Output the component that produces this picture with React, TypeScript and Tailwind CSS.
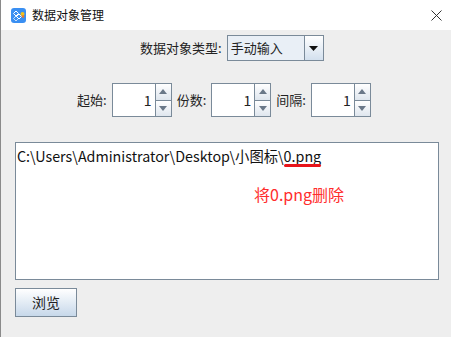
import React from 'react';

const font = { fontFamily: '"Noto Sans CJK SC", "Noto Sans", sans-serif' };

const Spinner = () => (
  <div className="flex h-[34px] w-[60px]">
    <div className="flex flex-1 items-center justify-end border border-[#7a8a99] bg-white pr-[3px] text-[14px] text-[#222]">
      1
    </div>
    <div className="flex w-[16px] flex-col border-y border-r border-[#7a8a99]">
      <div className="flex flex-1 items-center justify-center border-b border-[#7a8a99] bg-gradient-to-b from-white to-[#dfe6ee]">
        <svg width="8" height="5" viewBox="0 0 8 5">
          <path d="M0 5 L4 0 L8 5 Z" fill="#6a7888" />
        </svg>
      </div>
      <div className="flex flex-1 items-center justify-center bg-gradient-to-b from-white to-[#dfe6ee]">
        <svg width="8" height="5" viewBox="0 0 8 5">
          <path d="M0 0 L8 0 L4 5 Z" fill="#6a7888" />
        </svg>
      </div>
    </div>
  </div>
);

const AppIcon = () => (
  <svg width="15" height="15" viewBox="0 0 15 15">
    <rect x="0" y="0" width="15" height="15" rx="3" fill="#3a8ff2" />
    <g fill="none" stroke="#ffffff" strokeWidth="1">
      <path d="M5 3 L7.5 5.5 L5 8 L2.5 5.5 Z" />
      <path d="M8 6 L10.5 8.5 L8 11 L5.5 8.5 Z" />
      <path d="M5 8 L7.5 10.5 L5 13 L2.5 10.5 Z" opacity="0.7" />
    </g>
    <circle cx="11.5" cy="6" r="2" fill="#f5c21a" />
    <circle cx="12" cy="8.5" r="1.3" fill="#f07a22" />
  </svg>
);

export default function App() {
  return (
    <div className="flex h-[337px] w-[451px] flex-col border-l border-[#8a8a8a] bg-[#eeeeee]" style={font}>
      <div className="flex h-[30px] items-center bg-white pl-[10px] pr-[9px]">
        <AppIcon />
        <span className="ml-[6px] text-[12px] text-[#111]">数据对象管理</span>
        <svg className="ml-auto" width="11" height="11" viewBox="0 0 11 11">
          <path d="M0.5 0.5 L10.5 10.5 M10.5 0.5 L0.5 10.5" stroke="#333" strokeWidth="1" />
        </svg>
      </div>

      <div className="mt-[5px] flex h-[26px] items-center pl-[139px]">
        <span className="text-[13px] text-[#222]">数据对象类型:</span>
        <div className="ml-[5px] flex h-[26px] w-[97px] border border-[#7a8a99]">
          <div className="flex flex-1 items-center bg-[#e9eff6] pl-[3px] text-[13px] text-[#222]">手动输入</div>
          <div className="flex w-[19px] items-center justify-center border-l border-[#7a8a99] bg-gradient-to-b from-white to-[#d3e0ee]">
            <svg width="9" height="5" viewBox="0 0 9 5">
              <path d="M0 0 L9 0 L4.5 5 Z" fill="#111" />
            </svg>
          </div>
        </div>
      </div>

      <div className="mt-[22px] flex items-center pl-[76px]">
        <span className="text-[13px] text-[#222]">起始:</span>
        <div className="ml-[5px]"><Spinner /></div>
        <span className="ml-[5px] text-[13px] text-[#222]">份数:</span>
        <div className="ml-[5px]"><Spinner /></div>
        <span className="ml-[5px] text-[13px] text-[#222]">间隔:</span>
        <div className="ml-[5px]"><Spinner /></div>
      </div>

      <div className="mx-[14px] mt-[25px] h-[138px] w-[424px] border border-[#7a8a99] bg-white pl-[1px]">
        <div className="relative inline-block text-[14.3px] leading-[18px] text-[#111]">
          C:\Users\Administrator\Desktop\小图标\0.png
          <span className="absolute bottom-[-2px] right-[0px] h-[3px] w-[37px] rounded-full bg-[#e8141a]" />
        </div>
        <div className="mt-[17px] pl-[237px] text-[16px] leading-[20px] text-[#ff2d2d]">将0.png删除</div>
      </div>

      <button className="ml-[14px] mt-[8px] h-[29px] w-[62px] border border-[#7a8a99] bg-gradient-to-b from-white to-[#c7d8ea] text-[14px] text-[#222]">
        浏览
      </button>
    </div>
  );
}
